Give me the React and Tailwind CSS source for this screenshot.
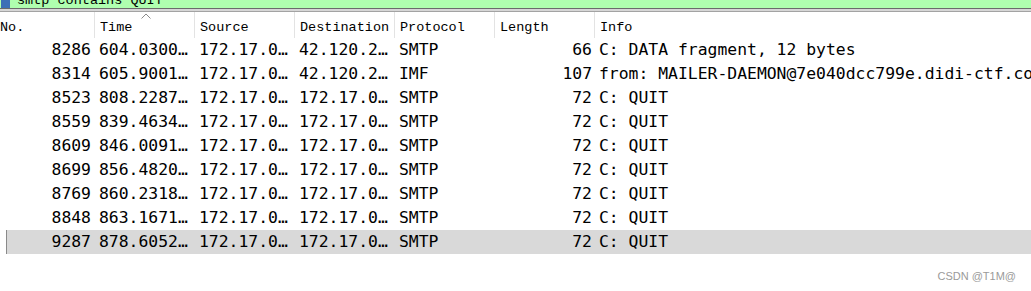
import React from "react";

const rows = [
  ["8286", "604.0300…", "172.17.0…", "42.120.2…", "SMTP", "66", "C: DATA fragment, 12 bytes"],
  ["8314", "605.9001…", "172.17.0…", "42.120.2…", "IMF", "107", "from: MAILER-DAEMON@7e040dcc799e.didi-ctf.com"],
  ["8523", "808.2287…", "172.17.0…", "172.17.0…", "SMTP", "72", "C: QUIT"],
  ["8559", "839.4634…", "172.17.0…", "172.17.0…", "SMTP", "72", "C: QUIT"],
  ["8609", "846.0091…", "172.17.0…", "172.17.0…", "SMTP", "72", "C: QUIT"],
  ["8699", "856.4820…", "172.17.0…", "172.17.0…", "SMTP", "72", "C: QUIT"],
  ["8769", "860.2318…", "172.17.0…", "172.17.0…", "SMTP", "72", "C: QUIT"],
  ["8848", "863.1671…", "172.17.0…", "172.17.0…", "SMTP", "72", "C: QUIT"],
  ["9287", "878.6052…", "172.17.0…", "172.17.0…", "SMTP", "72", "C: QUIT"],
];

const headers = ["No.", "Time", "Source", "Destination", "Protocol", "Length", "Info"];

const Row = ({ r, selected }) => (
  <div className="flex h-[24px] items-center whitespace-nowrap text-black">
    {selected && (
      <>
        <div className="h-full w-[6px] shrink-0 bg-white" />
        <div className="h-full w-px shrink-0 bg-[#8a8a8a]" />
      </>
    )}
    <div className={`flex h-full flex-1 items-center ${selected ? "bg-[#d9d9d9]" : ""}`}>
      <div className={`${selected ? "w-[88px]" : "w-[95px]"} shrink-0 pr-[4px] text-right`}>{r[0]}</div>
      <div className="w-[100px] shrink-0 pl-[4px]">{r[1]}</div>
      <div className="w-[100px] shrink-0 pl-[4px]">{r[2]}</div>
      <div className="w-[100px] shrink-0 pl-[4px]">{r[3]}</div>
      <div className="w-[100px] shrink-0 pl-[4px]">{r[4]}</div>
      <div className="w-[100px] shrink-0 pr-[3px] text-right">{r[5]}</div>
      <div className="pl-[4px]">{r[6]}</div>
    </div>
  </div>
);

export default function App() {
  return (
    <div className="h-[291px] w-[1031px] overflow-hidden bg-white">
      {/* filter bar, mostly scrolled off */}
      <div className="h-[8px] overflow-hidden bg-[#afffaf]">
        <div className="-mt-[7px] flex items-center whitespace-nowrap font-['Liberation_Mono',monospace] text-[13.5px] leading-[16px] text-black">
          <div className="ml-[1px] h-[14px] w-[9px] bg-[#3d6fb6]" />
          <span className="ml-[7px]">smtp contains QUIT</span>
        </div>
      </div>
      <div className="h-px bg-[#6b6b6b]" />
      <div className="h-[2px] bg-[#d6d6d6]" />
      <div className="h-px bg-[#a3a3a3]" />

      {/* column header */}
      <div className="relative flex h-[26px] whitespace-nowrap font-['Liberation_Mono',monospace] text-[13.5px] text-black">
        {headers.map((h, i) => (
          <div
            key={h}
            className={`flex h-full items-center pt-[6px] ${i === 0 ? "w-[95px] pl-0" : "w-[100px] pl-[5px]"} ${i < 6 ? "border-r border-[#e3e3e3]" : ""}`}
          >
            {h}
          </div>
        ))}
        <svg className="absolute left-[141px] top-[1px]" width="10" height="6" viewBox="0 0 10 6">
          <path d="M0.5 5.5 L5 1 L9.5 5.5" fill="none" stroke="#8a8a8a" strokeWidth="1" />
        </svg>
      </div>

      <div className="font-['DejaVu_Sans_Mono',monospace] text-[16.4px]">
        {rows.map((r, i) => (
          <Row key={r[0]} r={r} selected={i === rows.length - 1} />
        ))}
      </div>

      <div className="mt-[14px] pr-[15px] text-right font-['Liberation_Sans',sans-serif] text-[11px] text-[#9a9a9a]">
        CSDN @T1M@
      </div>
    </div>
  );
}
